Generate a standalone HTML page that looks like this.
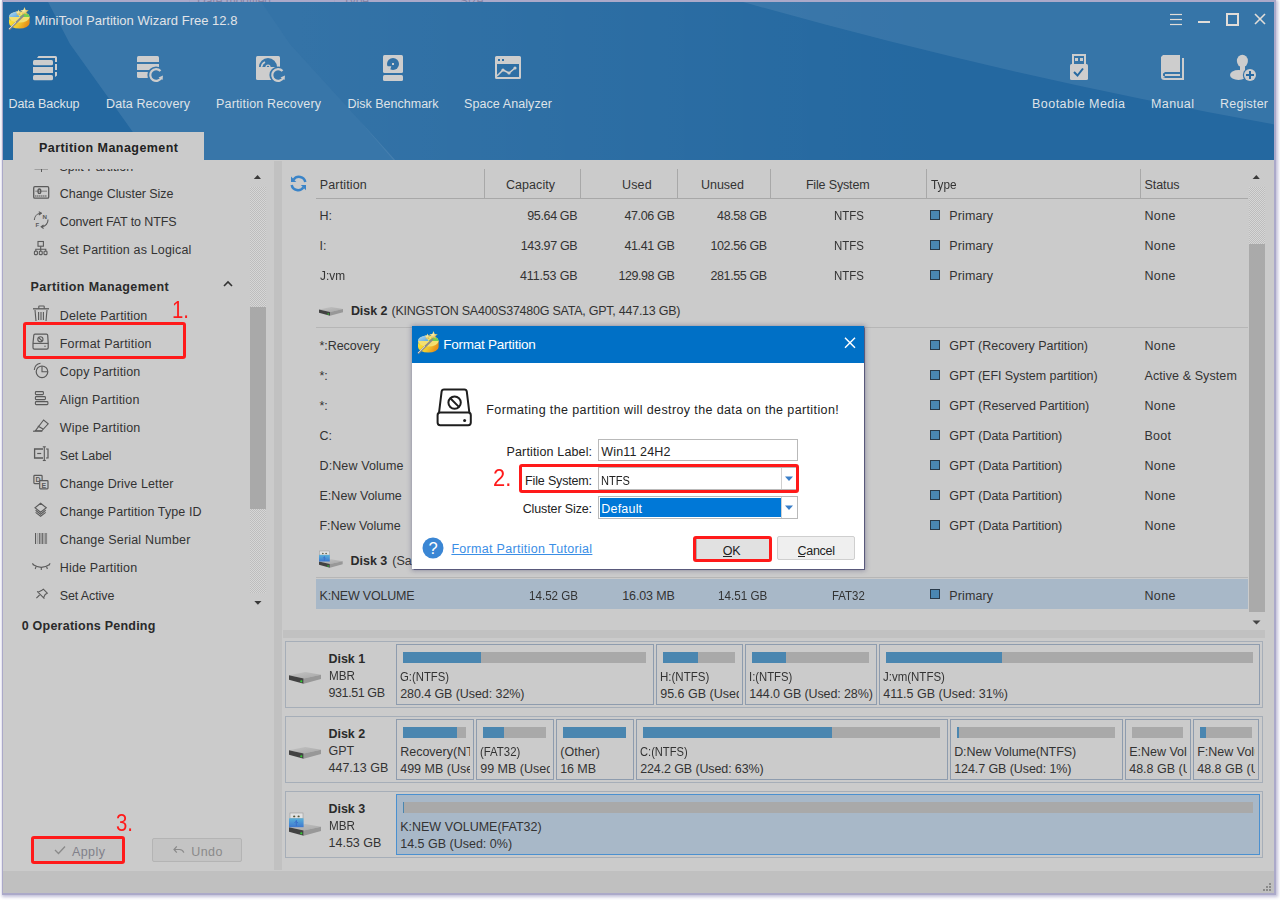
<!DOCTYPE html>
<html><head><meta charset="utf-8"><style>
html,body{margin:0;padding:0;width:1280px;height:900px;overflow:hidden;background:#fff}
.t{position:absolute;white-space:nowrap;font-family:"Liberation Sans", sans-serif;line-height:1;}
svg{overflow:visible}
</style></head><body>
<div style="position:absolute;left:0px;top:0px;width:1280px;height:900px;background:#fff"></div>
<div style="position:absolute;left:189px;top:0px;width:1px;height:3px;background:#e5e5e5"></div>
<div style="position:absolute;left:334px;top:0px;width:1px;height:3px;background:#e5e5e5"></div>
<div style="position:absolute;left:461px;top:0px;width:1px;height:3px;background:#e5e5e5"></div>
<span class="t" style="left:197px;top:-5.26px;font-size:12px;font-weight:400;color:#444;">Date modified</span>
<span class="t" style="left:343px;top:-5.26px;font-size:12px;font-weight:400;color:#444;">Type</span>
<span class="t" style="left:460px;top:-5.26px;font-size:12px;font-weight:400;color:#444;">Size</span>
<div style="position:absolute;left:2px;top:0px;width:1274px;height:895px;box-shadow:1px 1px 3px 1px rgba(120,115,170,0.45)"></div>
<div style="position:absolute;left:2px;top:0px;width:1274px;height:895px;background:rgba(150,148,188,0.8)"></div>
<div style="position:absolute;left:3px;top:160px;width:1271px;height:711px;background:#cbcbcb"></div>
<div style="position:absolute;left:3px;top:871px;width:1271px;height:22px;background:#c0c0c0"></div>
<div style="position:absolute;left:3px;top:169px;width:240px;height:20px;overflow:hidden">
<div style="position:absolute;left:-3px;top:-169px;width:1280px;height:900px">
<svg style="position:absolute;left:33px;top:155px;" width="17" height="17" viewBox="0 0 17 17"><line x1="1.5" y1="14.5" x2="15" y2="14.5" stroke="#a0a0a0"/><line x1="8.5" y1="11" x2="8.5" y2="17" stroke="#5a5a5a"/></svg>
<span class="t" style="left:59.5px;top:160.82px;font-size:12.5px;font-weight:400;color:#333;">Split Partition</span>
</div></div>
<div style="position:absolute;left:3px;top:2px;width:1271px;height:158px;overflow:hidden;background:#2468a0">
<svg style="position:absolute;left:-3px;top:-2px;" width="1280" height="162" viewBox="0 0 1280 162"><defs><linearGradient id="gB" gradientUnits="userSpaceOnUse" x1="280" y1="0" x2="950" y2="0"><stop offset="0" stop-color="#fff" stop-opacity="0.075"/><stop offset="1" stop-color="#fff" stop-opacity="0"/></linearGradient></defs><polygon points="260,0 1000,0 1000,162 395,162 360,121 290,44" fill="url(#gB)"/><polygon points="47,0 260,0 290,44 360,121 397,162 154,162 125,121 70,44" fill="#fff" fill-opacity="0.095"/><path d="M743,2 Q1000,75 1280,125.5 L1280,0 L743,0 Z" fill="#fff" fill-opacity="0.085"/></svg>
</div>
<span class="t" style="left:34.5px;top:13.90px;font-size:13px;font-weight:400;color:#e2e4e8;letter-spacing:0.020px;">MiniTool Partition Wizard Free 12.8</span>
<svg style="position:absolute;left:3px;top:4px;" width="30" height="30" viewBox="0 0 30 30">
<defs>
<linearGradient id="lya" x1="0" y1="0" x2="1" y2="0.3"><stop offset="0" stop-color="#ffe830"/><stop offset="0.6" stop-color="#f0c830"/><stop offset="1" stop-color="#e89018"/></linearGradient>
<linearGradient id="lba" x1="0" y1="0" x2="1" y2="1"><stop offset="0" stop-color="#b8dcf4"/><stop offset="1" stop-color="#5aa8e0"/></linearGradient>
<radialGradient id="lsa" cx="0.4" cy="0.4" r="0.7"><stop offset="0" stop-color="#fff4b0"/><stop offset="1" stop-color="#c8a030"/></radialGradient>
</defs>
<path d="M6,13 L6,19 A10.3,5.5 0 0 0 26.6,19 L26.6,13 Z" fill="url(#lya)"/>
<ellipse cx="16.3" cy="13" rx="10.3" ry="5.5" fill="#f4e070"/>
<path d="M16.3,13 L6,13 A10.3,5.5 0 0 1 14,7.6 Z" fill="url(#lba)"/>
<path d="M6,13 L6,15 A10.3,5 0 0 0 8,17" fill="#4a98d8" opacity="0.6"/>
<path d="M16.3,13 L22,8.5 A10.3,5.5 0 0 1 26.6,13 Z" fill="#70d050"/>
<polygon points="21.5,3 22.7,6 25.8,6.2 23.4,8.2 24.2,11.2 21.5,9.5 18.8,11.2 19.6,8.2 17.2,6.2 20.3,6" fill="url(#lsa)"/>
<polygon points="15.5,5.5 16.4,7.6 18.6,7.8 16.9,9.2 17.5,11.4 15.5,10.2 13.5,11.4 14.1,9.2 12.4,7.8 14.6,7.6" fill="url(#lsa)"/>
<polygon points="19,13 19.8,14.8 21.8,15 20.3,16.2 20.8,18.2 19,17.1 17.2,18.2 17.7,16.2 16.2,15 18.2,14.8" fill="#f0d870" opacity="0.8"/>
<line x1="6" y1="25.5" x2="21" y2="11" stroke="#8a8a8a" stroke-width="1.8"/>
<line x1="6" y1="25" x2="13" y2="18.2" stroke="#e8e8e8" stroke-width="0.8"/>
</svg>
<svg style="position:absolute;left:1168px;top:10px;" width="100" height="20" viewBox="0 0 100 20">
<g stroke="#e2ddd8" fill="none">
<line x1="2" y1="4.5" x2="14" y2="4.5" stroke-width="1.2"/>
<line x1="2" y1="9.5" x2="14" y2="9.5" stroke-width="1.2"/>
<line x1="2" y1="14.5" x2="14" y2="14.5" stroke-width="1.2"/>
<line x1="30" y1="12" x2="42" y2="12" stroke-width="2"/>
<rect x="59" y="4" width="11" height="11" stroke-width="2"/>
<line x1="87" y1="4" x2="97" y2="14" stroke-width="1.6"/>
<line x1="97" y1="4" x2="87" y2="14" stroke-width="1.6"/>
</g></svg>
<span class="t" style="left:8.5px;top:98.32px;font-size:12.5px;font-weight:400;color:#dfe3e8;letter-spacing:-0.058px;">Data Backup</span>
<span class="t" style="left:106px;top:98.32px;font-size:12.5px;font-weight:400;color:#dfe3e8;letter-spacing:0.109px;">Data Recovery</span>
<span class="t" style="left:216px;top:98.32px;font-size:12.5px;font-weight:400;color:#dfe3e8;letter-spacing:0.169px;">Partition Recovery</span>
<span class="t" style="left:347.5px;top:98.32px;font-size:12.5px;font-weight:400;color:#dfe3e8;">Disk Benchmark</span>
<span class="t" style="left:464px;top:98.32px;font-size:12.5px;font-weight:400;color:#dfe3e8;letter-spacing:0.088px;">Space Analyzer</span>
<span class="t" style="left:1032px;top:98.32px;font-size:12.5px;font-weight:400;color:#dfe3e8;letter-spacing:0.471px;">Bootable Media</span>
<span class="t" style="left:1151px;top:98.32px;font-size:12.5px;font-weight:400;color:#dfe3e8;letter-spacing:0.400px;">Manual</span>
<span class="t" style="left:1220px;top:98.32px;font-size:12.5px;font-weight:400;color:#dfe3e8;letter-spacing:0.208px;">Register</span>
<svg style="position:absolute;left:0px;top:0px;" width="1280" height="100" viewBox="0 0 1280 100">
<defs>
<mask id="mDR"><rect x="0" y="0" width="1280" height="100" fill="#fff"/><circle cx="156" cy="75" r="8.6" fill="#000"/></mask>
<mask id="mPR"><rect x="0" y="0" width="1280" height="100" fill="#fff"/><circle cx="278" cy="75" r="8.6" fill="#000"/>
  <path d="M259,67 A9,9 0 0 1 277,67 Z" fill="#000"/></mask>
<mask id="mDB"><rect x="0" y="0" width="1280" height="100" fill="#fff"/><circle cx="393" cy="64" r="6" fill="#000"/></mask>
<mask id="mRG"><rect x="0" y="0" width="1280" height="100" fill="#fff"/><circle cx="1250" cy="75" r="7.2" fill="#000"/></mask>
</defs>
<g fill="#cdcdcd">
<!-- data backup -->
<rect x="33" y="60" width="20" height="5.2" rx="1.5"/>
<rect x="33" y="67" width="20" height="6"/>
<rect x="33" y="75" width="20" height="5.2" rx="1.5"/>
<path d="M37,58 L38.5,56 L55.5,56 Q57,56 57,57.5 L57,62 L55,62 L55,58 Z"/>
<rect x="55" y="64" width="2" height="6"/>
<path d="M55,72 L57,72 L57,75.5 L55,77 Z"/>
<!-- data recovery -->
<g mask="url(#mDR)">
<path d="M137,62 L137,57.5 Q137,56 138.5,56 L157.5,56 Q159,56 159,57.5 L159,62 Z"/>
<rect x="137" y="64" width="22" height="6"/>
<path d="M137,72 L159,72 L159,78 L138.5,78 Q137,78 137,76.5 Z"/>
</g>
<path d="M160.5,71 A5.9,5.9 0 1 0 161.5,77.5" fill="none" stroke="#cdcdcd" stroke-width="2.2"/>
<polygon points="158.5,77.5 163,75.5 162.5,80"/>
<!-- partition recovery -->
<g mask="url(#mPR)"><rect x="256" y="56" width="24" height="24" rx="1.5"/></g>
<path d="M261.5,67 A6.5,6.5 0 0 1 265,62" fill="none" stroke="#cdcdcd" stroke-width="1.6"/>
<circle cx="268" cy="67" r="1.9" fill="none" stroke="#cdcdcd" stroke-width="1.4"/>
<path d="M282.5,71 A5.9,5.9 0 1 0 283.5,77.5" fill="none" stroke="#cdcdcd" stroke-width="2.2"/>
<polygon points="280.5,77.5 285,75.5 284.5,80"/>
<!-- disk benchmark -->
<g mask="url(#mDB)"><rect x="383" y="55" width="20" height="18" rx="1.5"/></g>
<polygon points="386.5,66.2 391.3,66.2 390,70.5"/>
<rect x="392" y="63" width="2" height="2"/>
<rect x="383" y="75" width="20" height="6" rx="1.5"/>
<!-- space analyzer -->
<path fill-rule="evenodd" d="M496.5,56 L519.5,56 Q521,56 521,57.5 L521,77.5 Q521,79 519.5,79 L496.5,79 Q495,79 495,77.5 L495,57.5 Q495,56 496.5,56 Z M497,64 L497,77 L519,77 L519,64 Z M498,59 L498,61 L500,61 L500,59 Z M502,59 L502,61 L504,61 L504,59 Z"/>
<polyline points="497,76 503,70 509,73 515,68" fill="none" stroke="#cdcdcd" stroke-width="1.5"/>
<circle cx="503" cy="70" r="1.6"/><circle cx="509" cy="73" r="1.6"/><circle cx="515" cy="68" r="1.6"/>
<!-- bootable media -->
<path fill-rule="evenodd" d="M1072,54 L1086,54 L1086,64 L1072,64 Z M1074,56 L1074,64 L1084,64 L1084,56 Z"/>
<rect x="1075" y="58" width="3" height="3"/><rect x="1080" y="58" width="3" height="3"/>
<rect x="1070" y="64" width="18" height="16" rx="1.5"/>
<!-- manual -->
<path d="M1163,55 L1180,55 L1180,72 L1163,72 Q1161,72 1161,74 L1161,57 Z"/>
<path d="M1162,58 L1162,77 Q1162,79 1164.5,79 L1183,79 L1183,58" fill="none" stroke="#cdcdcd" stroke-width="2"/>
<path d="M1164.5,72 Q1162,72 1162,75 Q1162,77 1164.5,77" fill="none" stroke="#cdcdcd" stroke-width="1.6"/>
<rect x="1165" y="74" width="15" height="2"/>
<!-- register -->
<g mask="url(#mRG)">
<ellipse cx="1242.4" cy="61" rx="5.5" ry="6.2"/>
<rect x="1240" y="65" width="5" height="6"/>
<ellipse cx="1238.5" cy="75" rx="8.5" ry="5"/>
</g>
<circle cx="1250" cy="75" r="6"/>
</g>
<polyline points="1074,72 1077.5,75.5 1083,68.5" fill="none" stroke="#2569a1" stroke-width="2"/>
<line x1="1246" y1="75" x2="1254" y2="75" stroke="#2569a1" stroke-width="2"/>
<line x1="1250" y1="71" x2="1250" y2="79" stroke="#2569a1" stroke-width="2"/>
</svg>
<div style="position:absolute;left:13px;top:132px;width:191px;height:28px;background:#cbcbcb"></div>
<span class="t" style="left:39px;top:141.82px;font-size:12.5px;font-weight:700;color:#222;letter-spacing:0.443px;">Partition Management</span>
<span class="t" style="left:59.75px;top:187.82px;font-size:12.5px;font-weight:400;color:#333;letter-spacing:-0.050px;">Change Cluster Size</span>
<span class="t" style="left:59.75px;top:215.82px;font-size:12.5px;font-weight:400;color:#333;letter-spacing:-0.126px;">Convert FAT to NTFS</span>
<span class="t" style="left:59.75px;top:243.82px;font-size:12.5px;font-weight:400;color:#333;letter-spacing:0.163px;">Set Partition as Logical</span>
<span class="t" style="left:59.75px;top:309.82px;font-size:12.5px;font-weight:400;color:#333;letter-spacing:0.135px;">Delete Partition</span>
<span class="t" style="left:59.75px;top:337.82px;font-size:12.5px;font-weight:400;color:#333;letter-spacing:0.189px;">Format Partition</span>
<span class="t" style="left:59.75px;top:365.82px;font-size:12.5px;font-weight:400;color:#333;letter-spacing:0.153px;">Copy Partition</span>
<span class="t" style="left:59.75px;top:393.82px;font-size:12.5px;font-weight:400;color:#333;letter-spacing:0.177px;">Align Partition</span>
<span class="t" style="left:59.75px;top:421.82px;font-size:12.5px;font-weight:400;color:#333;letter-spacing:0.207px;">Wipe Partition</span>
<span class="t" style="left:59.75px;top:449.82px;font-size:12.5px;font-weight:400;color:#333;letter-spacing:-0.116px;">Set Label</span>
<span class="t" style="left:59.75px;top:477.82px;font-size:12.5px;font-weight:400;color:#333;letter-spacing:0.101px;">Change Drive Letter</span>
<span class="t" style="left:59.75px;top:505.82px;font-size:12.5px;font-weight:400;color:#333;letter-spacing:0.103px;">Change Partition Type ID</span>
<span class="t" style="left:59.75px;top:533.82px;font-size:12.5px;font-weight:400;color:#333;letter-spacing:0.181px;">Change Serial Number</span>
<span class="t" style="left:59.75px;top:561.82px;font-size:12.5px;font-weight:400;color:#333;letter-spacing:0.181px;">Hide Partition</span>
<span class="t" style="left:59.75px;top:589.82px;font-size:12.5px;font-weight:400;color:#333;letter-spacing:-0.110px;">Set Active</span>
<svg style="position:absolute;left:0px;top:0px;" width="300" height="620" viewBox="0 0 300 620"><g fill="none" stroke="#5a5a5a" stroke-width="1.1">
<!-- cluster -->
<rect x="33.7" y="186.7" width="15" height="11.5" rx="1.2" stroke-width="1.3"/>
<line x1="35.3" y1="191.2" x2="47" y2="191.2" stroke="#888" stroke-width="1.2"/>
<ellipse cx="39.4" cy="191.2" rx="1.4" ry="2.2" stroke-width="1.3"/>
<line x1="35.3" y1="196" x2="47" y2="196" stroke-dasharray="1.1,0.9" stroke-width="1.3"/>
<!-- convert -->
<path d="M34.3,220 A7,7 0 0 1 40.5,213.3"/>
<polyline points="38.8,211.6 41,213.3 38.8,215" />
<path d="M48,219.5 A7,7 0 0 1 42,226.8"/>
<polyline points="43.6,225 41.2,226.8 43.6,228.5"/>
<!-- logical -->
<rect x="38" y="241.5" width="5.4" height="4.7"/>
<line x1="40.7" y1="246.2" x2="40.7" y2="251"/>
<polyline points="35.8,251 35.8,249.3 45.8,249.3 45.8,251"/>
<rect x="34.4" y="251.3" width="3" height="3.3" rx="0.6"/>
<rect x="39.3" y="251.3" width="2.9" height="3.3" rx="0.6"/>
<rect x="44" y="251.3" width="3" height="3.3" rx="0.6"/>
<!-- delete -->
<line x1="33" y1="308.8" x2="49" y2="308.8" stroke-width="1.3"/>
<path d="M38.8,308.5 L38.8,306.6 Q38.8,306 39.4,306 L43.6,306 Q44.2,306 44.2,306.6 L44.2,308.5"/>
<polyline points="35,310 36,321"/><polyline points="47,310 46,321"/>
<line x1="38.6" y1="312" x2="38.6" y2="320"/><line x1="41" y1="312" x2="41" y2="320"/><line x1="43.4" y1="312" x2="43.4" y2="320"/>
<!-- format -->
<path d="M35,334.2 L46.5,334.2 Q47.6,334.2 47.7,335.3 L48.2,343.3 L48.2,347.8 Q48.2,349.2 46.8,349.2 L34.4,349.2 Q33,349.2 33,347.8 L33,343.3 L33.8,335.3 Q33.9,334.2 35,334.2 Z" stroke-width="1.2"/>
<line x1="33" y1="343.4" x2="48.2" y2="343.4"/>
<circle cx="40.4" cy="339.3" r="2.6"/>
<line x1="38.6" y1="337.5" x2="42.2" y2="341.1"/>
<!-- copy -->
<circle cx="42" cy="371.8" r="5.8" stroke-width="1.2"/>
<path d="M34.3,370 A7.5,7.5 0 0 1 40.5,363.3" stroke-width="1.1"/>
<polyline points="42,366 42,371.8 47.8,371.8"/>
<!-- align -->
<rect x="35.4" y="391.6" width="8" height="3" rx="0.8"/>
<rect x="35.4" y="396.6" width="10" height="3" rx="0.8"/>
<rect x="35.4" y="401.6" width="12.5" height="3" rx="0.8"/>
<!-- wipe -->
<polygon points="35.3,430.8 43.6,420 48.2,423.9 41.8,430.8"/>
<line x1="33" y1="431.2" x2="42.3" y2="431.2"/>
<line x1="37.8" y1="426" x2="43" y2="429"/>
<!-- set label -->
<path d="M43,449 L34.6,449 L34.6,458 L43,458" stroke-width="1.3"/>
<path d="M46,449 L48,449 L48,458 L46,458" stroke-width="1.2"/>
<line x1="37.2" y1="453.5" x2="41.2" y2="453.5" stroke-width="1.2"/>
<line x1="44.3" y1="447" x2="44.3" y2="460.3"/>
<line x1="42.8" y1="446.8" x2="45.8" y2="446.8"/><line x1="42.8" y1="460.5" x2="45.8" y2="460.5"/>
<!-- drive letter -->
<rect x="33.9" y="475.4" width="8.2" height="8.2" rx="0.8" stroke-width="1.2"/>
<rect x="39.7" y="480.6" width="8.3" height="8.3" rx="0.8" fill="#cbcbcb" stroke-width="1.2"/>
<!-- type id -->
<polygon points="40.6,503.2 46.3,507.8 40.6,512.2 35,507.8"/>
<polyline points="35.6,510.2 40.6,514.2 45.7,510.2"/>
<polyline points="35.6,512.4 40.6,516.3 45.7,512.4"/>
<!-- hide -->
<path d="M32.8,564.6 Q41.3,570 49.8,564.6" stroke-width="1.2"/>
<line x1="36" y1="566.8" x2="35.2" y2="569"/><line x1="41.3" y1="567.6" x2="41.3" y2="570"/><line x1="46.6" y1="566.8" x2="47.4" y2="569"/>
<line x1="33.5" y1="565" x2="32.5" y2="563.2"/><line x1="49.1" y1="565" x2="50.1" y2="563.2"/>
<!-- set active -->
<line x1="36.4" y1="598.2" x2="39.6" y2="595"/>
<polygon points="43.3,589.2 47.3,593.2 45.2,594.4 43.6,597.6 44.4,598.6 37.2,591.4 38.2,592.2 41.4,590.6"/>
</g>
<g fill="#5a5a5a" stroke="none" font-family="Liberation Sans" font-weight="700">
<text x="42.6" y="219" font-size="6.2">N</text>
<text x="35.4" y="226.6" font-size="6">F</text>
<text x="35.6" y="482.4" font-size="7">D</text>
<text x="41.6" y="487.6" font-size="7">E</text>
<circle cx="45" cy="346.3" r="0.7"/>
<polygon points="40.5,211.8 42.2,213.3 40.3,214.6"/>
<rect x="35" y="533" width="1.1" height="11"/>
<rect x="37.3" y="533" width="0.8" height="11" fill="#999"/>
<rect x="38.9" y="533" width="0.9" height="11"/>
<rect x="40.5" y="533" width="1" height="11" fill="#777"/>
<rect x="42.2" y="533" width="1.1" height="11"/>
<rect x="44.5" y="533" width="2.6" height="11" fill="#888"/>
</g></svg>
<span class="t" style="left:30.6px;top:280.82px;font-size:12.5px;font-weight:700;color:#2a2a2a;letter-spacing:0.401px;">Partition Management</span>
<svg style="position:absolute;left:222px;top:280px;" width="12" height="8" viewBox="0 0 12 8"><polyline points="2,6 6,2 10,6" stroke="#333" stroke-width="1.6" fill="none"/></svg>
<span class="t" style="left:21.7px;top:620.12px;font-size:12.5px;font-weight:700;color:#2a2a2a;letter-spacing:0.237px;">0 Operations Pending</span>
<svg style="position:absolute;left:250px;top:171px;" width="16" height="10" viewBox="0 0 16 10"><polygon points="3.8,7.9 7.6,4 11,7.9" fill="#3a3a3a"/></svg>
<div style="position:absolute;left:250px;top:187px;width:16px;height:406px;background:repeating-conic-gradient(#bdbdbd 0 25%, #d6d6d6 0 50%) 0 0/2px 2px"></div>
<div style="position:absolute;left:250px;top:307px;width:16px;height:202px;background:#a9a9a9"></div>
<svg style="position:absolute;left:250px;top:598px;" width="16" height="10" viewBox="0 0 16 10"><polygon points="4.3,3 11.5,3 7.9,6.8" fill="#3a3a3a"/></svg>
<div style="position:absolute;left:274px;top:161px;width:8px;height:709px;background:#c1c1c1"></div>
<div style="position:absolute;left:23px;top:321.5px;width:162.5px;height:37px;border:3px solid #ff1a1a;border-radius:3px;box-sizing:border-box"></div>
<span class="t" style="left:171.5px;transform:scaleX(0.8669);transform-origin:0 0;top:298.91px;font-size:23.5px;font-weight:400;color:#ff1a1a;">1.</span>
<div style="position:absolute;left:33px;top:838px;width:90px;height:24px;background:#c4c4c4;border:1px solid #b4b4b4;box-sizing:border-box"></div>
<svg style="position:absolute;left:54px;top:845px;" width="12" height="10" viewBox="0 0 12 10"><polyline points="1,5 4.5,8.5 11,1.5" stroke="#8a8a8a" stroke-width="1.3" fill="none"/></svg>
<span class="t" style="left:71.9px;top:846.22px;font-size:12.5px;font-weight:400;color:#80808a;letter-spacing:0.430px;">Apply</span>
<div style="position:absolute;left:31px;top:836px;width:93.5px;height:28px;border:3px solid #ff1a1a;border-radius:3px;box-sizing:border-box"></div>
<span class="t" style="left:116px;transform:scaleX(0.8860);transform-origin:0 0;top:812.33px;font-size:23px;font-weight:400;color:#ff1a1a;">3.</span>
<div style="position:absolute;left:152px;top:838px;width:90px;height:24px;background:#c4c4c4;border:1px solid #b4b4b4;box-sizing:border-box;border-radius:2px"></div>
<svg style="position:absolute;left:0px;top:0px;" width="250" height="870" viewBox="0 0 250 870"><g fill="none" stroke="#8a8a8a" stroke-width="1.2"><polyline points="176.8,846.3 174,849.5 176.8,852.6"/><path d="M174.2,849.5 L179.5,849.5 Q182.8,849.5 183.8,852.6"/></g></svg>
<span class="t" style="left:191.2px;top:845.82px;font-size:12.5px;font-weight:400;color:#8a8a8a;letter-spacing:0.436px;">Undo</span>
<svg style="position:absolute;left:0px;top:0px;" width="320" height="200" viewBox="0 0 320 200"><g fill="#3a84c8"><path d="M305.3,182 A6.5,6.5 0 0 0 293.6,179.6" fill="none" stroke="#3a84c8" stroke-width="2.5"/><polygon points="291,176.6 291,182.1 296.3,182.1"/><path d="M291.7,185 A6.5,6.5 0 0 0 303.4,187.4" fill="none" stroke="#3a84c8" stroke-width="2.5"/><polygon points="306,184.9 306,190.2 300.8,184.9"/></g></svg>
<span class="t" style="left:319.8px;top:179.32px;font-size:12.5px;font-weight:400;color:#333;letter-spacing:0.143px;">Partition</span>
<span class="t" style="left:506px;top:179.32px;font-size:12.5px;font-weight:400;color:#333;letter-spacing:0.051px;">Capacity</span>
<span class="t" style="left:622px;top:179.32px;font-size:12.5px;font-weight:400;color:#333;letter-spacing:0.171px;">Used</span>
<span class="t" style="left:701px;top:179.32px;font-size:12.5px;font-weight:400;color:#333;letter-spacing:-0.019px;">Unused</span>
<span class="t" style="left:805.9px;top:179.32px;font-size:12.5px;font-weight:400;color:#333;letter-spacing:-0.160px;">File System</span>
<span class="t" style="left:931.4px;transform:scaleX(0.9443);transform-origin:0 0;top:179.32px;font-size:12.5px;font-weight:400;color:#333;">Type</span>
<span class="t" style="left:1144.5px;top:179.32px;font-size:12.5px;font-weight:400;color:#333;letter-spacing:-0.087px;">Status</span>
<div style="position:absolute;left:484px;top:169px;width:1px;height:30px;background:#a8a8a8"></div>
<div style="position:absolute;left:580px;top:169px;width:1px;height:30px;background:#a8a8a8"></div>
<div style="position:absolute;left:677px;top:169px;width:1px;height:30px;background:#a8a8a8"></div>
<div style="position:absolute;left:770px;top:169px;width:1px;height:30px;background:#a8a8a8"></div>
<div style="position:absolute;left:926px;top:169px;width:1px;height:30px;background:#a8a8a8"></div>
<div style="position:absolute;left:1140px;top:169px;width:1px;height:30px;background:#a8a8a8"></div>
<div style="position:absolute;left:316px;top:198px;width:932px;height:1px;background:#a8a8a8"></div>
<svg style="position:absolute;left:1248px;top:171px;" width="17" height="10" viewBox="0 0 17 10"><polygon points="4.6,7.9 8.4,4 11.8,7.9" fill="#3a3a3a"/></svg>
<div style="position:absolute;left:1249px;top:187px;width:16px;height:57px;background:repeating-conic-gradient(#bdbdbd 0 25%, #d6d6d6 0 50%) 0 0/2px 2px"></div>
<div style="position:absolute;left:1249px;top:244px;width:16px;height:368px;background:#aaaaaa"></div>
<svg style="position:absolute;left:1248px;top:618px;" width="17" height="10" viewBox="0 0 17 10"><polygon points="4.5,2.5 12.5,2.5 8.5,6.5" fill="#444"/></svg>
<span class="t" style="left:319.5px;top:210.32px;font-size:12.5px;font-weight:400;color:#333;">H:</span>
<span class="t" style="left:527.20px;top:210.32px;font-size:12.5px;font-weight:400;color:#333;letter-spacing:-0.347px;">95.64 GB</span>
<span class="t" style="left:624.40px;top:210.32px;font-size:12.5px;font-weight:400;color:#333;letter-spacing:-0.347px;">47.06 GB</span>
<span class="t" style="left:717.10px;top:210.32px;font-size:12.5px;font-weight:400;color:#333;letter-spacing:-0.390px;">48.58 GB</span>
<span class="t" style="left:833.65px;transform:scaleX(0.9160);transform-origin:0 0;top:210.32px;font-size:12.5px;font-weight:400;color:#333;">NTFS</span>
<div style="position:absolute;left:929.5px;top:209.5px;width:10px;height:10px;background:#4a86b2;border:1px solid #2a3a4a;box-sizing:border-box"></div>
<span class="t" style="left:949.3px;top:210.32px;font-size:12.5px;font-weight:400;color:#333;letter-spacing:0.123px;">Primary</span>
<span class="t" style="left:1144.5px;top:210.32px;font-size:12.5px;font-weight:400;color:#333;letter-spacing:0.336px;">None</span>
<span class="t" style="left:319.5px;top:240.32px;font-size:12.5px;font-weight:400;color:#333;">I:</span>
<span class="t" style="left:520.70px;top:240.32px;font-size:12.5px;font-weight:400;color:#333;letter-spacing:-0.358px;">143.97 GB</span>
<span class="t" style="left:624.40px;top:240.32px;font-size:12.5px;font-weight:400;color:#333;letter-spacing:-0.347px;">41.41 GB</span>
<span class="t" style="left:710.40px;top:240.32px;font-size:12.5px;font-weight:400;color:#333;letter-spacing:-0.371px;">102.56 GB</span>
<span class="t" style="left:833.65px;transform:scaleX(0.9160);transform-origin:0 0;top:240.32px;font-size:12.5px;font-weight:400;color:#333;">NTFS</span>
<div style="position:absolute;left:929.5px;top:239.5px;width:10px;height:10px;background:#4a86b2;border:1px solid #2a3a4a;box-sizing:border-box"></div>
<span class="t" style="left:949.3px;top:240.32px;font-size:12.5px;font-weight:400;color:#333;letter-spacing:0.123px;">Primary</span>
<span class="t" style="left:1144.5px;top:240.32px;font-size:12.5px;font-weight:400;color:#333;letter-spacing:0.336px;">None</span>
<span class="t" style="left:319.5px;transform:scaleX(0.9473);transform-origin:0 0;top:270.32px;font-size:12.5px;font-weight:400;color:#333;">J:vm</span>
<span class="t" style="left:520.00px;top:270.32px;font-size:12.5px;font-weight:400;color:#333;letter-spacing:-0.155px;">411.53 GB</span>
<span class="t" style="left:618.50px;top:270.32px;font-size:12.5px;font-weight:400;color:#333;letter-spacing:-0.433px;">129.98 GB</span>
<span class="t" style="left:710.40px;top:270.32px;font-size:12.5px;font-weight:400;color:#333;letter-spacing:-0.371px;">281.55 GB</span>
<span class="t" style="left:833.65px;transform:scaleX(0.9160);transform-origin:0 0;top:270.32px;font-size:12.5px;font-weight:400;color:#333;">NTFS</span>
<div style="position:absolute;left:929.5px;top:269.5px;width:10px;height:10px;background:#4a86b2;border:1px solid #2a3a4a;box-sizing:border-box"></div>
<span class="t" style="left:949.3px;top:270.32px;font-size:12.5px;font-weight:400;color:#333;letter-spacing:0.123px;">Primary</span>
<span class="t" style="left:1144.5px;top:270.32px;font-size:12.5px;font-weight:400;color:#333;letter-spacing:0.336px;">None</span>
<svg style="position:absolute;left:319px;top:307.1px;" width="24.0" height="9.0" viewBox="0 0 24.0 9.0"><g transform="scale(0.75)"><defs><linearGradient id="dtop" x1="0" y1="0" x2="1" y2="1"><stop offset="0" stop-color="#c2c2c2"/><stop offset="1" stop-color="#a8a8a8"/></linearGradient><linearGradient id="ublue" x1="0" y1="0" x2="0" y2="1"><stop offset="0" stop-color="#5ab0d8"/><stop offset="1" stop-color="#3d78d0"/></linearGradient></defs><polygon points="0,3.2 16.3,0 32,2.7 14.7,6.5" fill="url(#dtop)"/><polygon points="0,3.2 14.7,6.5 14.7,11.7 0,7.7" fill="#424242"/><polygon points="14.7,6.5 32,2.7 32,7 14.7,11.7" fill="#989898"/><circle cx="12.3" cy="9.3" r="1.1" fill="#3c3"/></g></svg>
<span class="t" style="left:350.9px;top:305.32px;font-size:12.5px;font-weight:700;color:#2a2a2a;letter-spacing:-0.049px;">Disk 2</span>
<span class="t" style="left:391.5px;top:305.32px;font-size:12.5px;font-weight:400;color:#333;letter-spacing:-0.243px;">(KINGSTON SA400S37480G SATA, GPT, 447.13 GB)</span>
<div style="position:absolute;left:316px;top:327px;width:932px;height:1px;background:#b6b6b6"></div>
<span class="t" style="left:319.5px;top:340.32px;font-size:12.5px;font-weight:400;color:#333;letter-spacing:-0.060px;">*:Recovery</span>
<div style="position:absolute;left:929.5px;top:339.5px;width:10px;height:10px;background:#4a86b2;border:1px solid #2a3a4a;box-sizing:border-box"></div>
<span class="t" style="left:949.3px;top:340.32px;font-size:12.5px;font-weight:400;color:#333;letter-spacing:-0.031px;">GPT (Recovery Partition)</span>
<span class="t" style="left:1144.5px;top:340.32px;font-size:12.5px;font-weight:400;color:#333;letter-spacing:0.336px;">None</span>
<span class="t" style="left:319.5px;top:370.32px;font-size:12.5px;font-weight:400;color:#333;">*:</span>
<div style="position:absolute;left:929.5px;top:369.5px;width:10px;height:10px;background:#4a86b2;border:1px solid #2a3a4a;box-sizing:border-box"></div>
<span class="t" style="left:949.3px;top:370.32px;font-size:12.5px;font-weight:400;color:#333;letter-spacing:-0.060px;">GPT (EFI System partition)</span>
<span class="t" style="left:1144.5px;top:370.32px;font-size:12.5px;font-weight:400;color:#333;letter-spacing:0.093px;">Active &amp; System</span>
<span class="t" style="left:319.5px;top:400.32px;font-size:12.5px;font-weight:400;color:#333;">*:</span>
<div style="position:absolute;left:929.5px;top:399.5px;width:10px;height:10px;background:#4a86b2;border:1px solid #2a3a4a;box-sizing:border-box"></div>
<span class="t" style="left:949.3px;top:400.32px;font-size:12.5px;font-weight:400;color:#333;letter-spacing:-0.005px;">GPT (Reserved Partition)</span>
<span class="t" style="left:1144.5px;top:400.32px;font-size:12.5px;font-weight:400;color:#333;letter-spacing:0.336px;">None</span>
<span class="t" style="left:319.5px;top:430.32px;font-size:12.5px;font-weight:400;color:#333;">C:</span>
<div style="position:absolute;left:929.5px;top:429.5px;width:10px;height:10px;background:#4a86b2;border:1px solid #2a3a4a;box-sizing:border-box"></div>
<span class="t" style="left:949.3px;top:430.32px;font-size:12.5px;font-weight:400;color:#333;letter-spacing:-0.001px;">GPT (Data Partition)</span>
<span class="t" style="left:1144.5px;top:430.32px;font-size:12.5px;font-weight:400;color:#333;letter-spacing:0.260px;">Boot</span>
<span class="t" style="left:319.5px;top:460.32px;font-size:12.5px;font-weight:400;color:#333;letter-spacing:0.110px;">D:New Volume</span>
<div style="position:absolute;left:929.5px;top:459.5px;width:10px;height:10px;background:#4a86b2;border:1px solid #2a3a4a;box-sizing:border-box"></div>
<span class="t" style="left:949.3px;top:460.32px;font-size:12.5px;font-weight:400;color:#333;letter-spacing:-0.001px;">GPT (Data Partition)</span>
<span class="t" style="left:1144.5px;top:460.32px;font-size:12.5px;font-weight:400;color:#333;letter-spacing:0.336px;">None</span>
<span class="t" style="left:319.5px;top:490.32px;font-size:12.5px;font-weight:400;color:#333;letter-spacing:0.029px;">E:New Volume</span>
<div style="position:absolute;left:929.5px;top:489.5px;width:10px;height:10px;background:#4a86b2;border:1px solid #2a3a4a;box-sizing:border-box"></div>
<span class="t" style="left:949.3px;top:490.32px;font-size:12.5px;font-weight:400;color:#333;letter-spacing:-0.001px;">GPT (Data Partition)</span>
<span class="t" style="left:1144.5px;top:490.32px;font-size:12.5px;font-weight:400;color:#333;letter-spacing:0.336px;">None</span>
<span class="t" style="left:319.5px;top:520.32px;font-size:12.5px;font-weight:400;color:#333;letter-spacing:-0.016px;">F:New Volume</span>
<div style="position:absolute;left:929.5px;top:519.5px;width:10px;height:10px;background:#4a86b2;border:1px solid #2a3a4a;box-sizing:border-box"></div>
<span class="t" style="left:949.3px;top:520.32px;font-size:12.5px;font-weight:400;color:#333;letter-spacing:-0.001px;">GPT (Data Partition)</span>
<span class="t" style="left:1144.5px;top:520.32px;font-size:12.5px;font-weight:400;color:#333;letter-spacing:0.336px;">None</span>
<svg style="position:absolute;left:319px;top:550.79px;" width="23.68" height="17.02" viewBox="0 0 23.68 17.02"><g transform="scale(0.74)"><defs><linearGradient id="dtop" x1="0" y1="0" x2="1" y2="1"><stop offset="0" stop-color="#c2c2c2"/><stop offset="1" stop-color="#a8a8a8"/></linearGradient><linearGradient id="ublue" x1="0" y1="0" x2="0" y2="1"><stop offset="0" stop-color="#5ab0d8"/><stop offset="1" stop-color="#3d78d0"/></linearGradient></defs><polygon points="0,14.2 16.3,11 32,13.7 14.7,17.5" fill="url(#dtop)"/><polygon points="0,14.2 14.7,17.5 14.7,22.7 0,18.7" fill="#424242"/><polygon points="14.7,17.5 32,13.7 32,18 14.7,22.7" fill="#989898"/><circle cx="12.3" cy="20.3" r="1.1" fill="#3c3"/><rect x="1" y="0" width="13" height="5.5" fill="#e2e2e2" stroke="#9a9a9a" stroke-width="0.6"/><ellipse cx="5.2" cy="3.4" rx="1.1" ry="0.9" fill="#55553a"/><ellipse cx="9.6" cy="3.4" rx="1.1" ry="0.9" fill="#55553a"/><rect x="0" y="5.3" width="14.6" height="8.9" fill="url(#ublue)"/><path d="M7.3,7 L7.3,13 M5.5,9.5 L7.3,8.5 L9,10" stroke="#3a6ac8" stroke-width="0.9" fill="none"/></g></svg>
<span class="t" style="left:350.6px;top:554.82px;font-size:12.5px;font-weight:700;color:#2a2a2a;letter-spacing:-0.049px;">Disk 3</span>
<span class="t" style="left:392.3px;top:554.82px;font-size:12.5px;font-weight:400;color:#333;">(SanDisk Cruzer Blade USB, MBR, 14.53 GB)</span>
<div style="position:absolute;left:316px;top:577px;width:932px;height:1px;background:#b6b6b6"></div>
<div style="position:absolute;left:316px;top:579px;width:932px;height:30px;background:#a8b8c8"></div>
<span class="t" style="left:319.5px;top:589.82px;font-size:12.5px;font-weight:400;color:#333;letter-spacing:-0.195px;">K:NEW VOLUME</span>
<span class="t" style="left:528.50px;transform:scaleX(0.9294);transform-origin:0 0;top:589.82px;font-size:12.5px;font-weight:400;color:#333;">14.52 GB</span>
<span class="t" style="left:622.30px;top:589.82px;font-size:12.5px;font-weight:400;color:#333;letter-spacing:-0.145px;">16.03 MB</span>
<span class="t" style="left:717.90px;transform:scaleX(0.9332);transform-origin:0 0;top:589.82px;font-size:12.5px;font-weight:400;color:#333;">14.51 GB</span>
<span class="t" style="left:832.20px;transform:scaleX(0.9135);transform-origin:0 0;top:589.82px;font-size:12.5px;font-weight:400;color:#333;">FAT32</span>
<div style="position:absolute;left:929.5px;top:589px;width:10px;height:10px;background:#4a86b2;border:1px solid #2a3a4a;box-sizing:border-box"></div>
<span class="t" style="left:949.3px;top:589.82px;font-size:12.5px;font-weight:400;color:#333;letter-spacing:0.123px;">Primary</span>
<span class="t" style="left:1144.5px;top:589.82px;font-size:12.5px;font-weight:400;color:#333;letter-spacing:0.336px;">None</span>
<div style="position:absolute;left:283px;top:630px;width:982px;height:8px;background:#c1c1c1"></div>
<div style="position:absolute;left:285px;top:641px;width:978px;height:67px;border:1px solid #a6aeb8;box-sizing:border-box"></div>
<svg style="position:absolute;left:289px;top:671.8px;" width="32.0" height="12.0" viewBox="0 0 32.0 12.0"><g transform="scale(1.0)"><defs><linearGradient id="dtop" x1="0" y1="0" x2="1" y2="1"><stop offset="0" stop-color="#c2c2c2"/><stop offset="1" stop-color="#a8a8a8"/></linearGradient><linearGradient id="ublue" x1="0" y1="0" x2="0" y2="1"><stop offset="0" stop-color="#5ab0d8"/><stop offset="1" stop-color="#3d78d0"/></linearGradient></defs><polygon points="0,3.2 16.3,0 32,2.7 14.7,6.5" fill="url(#dtop)"/><polygon points="0,3.2 14.7,6.5 14.7,11.7 0,7.7" fill="#424242"/><polygon points="14.7,6.5 32,2.7 32,7 14.7,11.7" fill="#989898"/><circle cx="12.3" cy="9.3" r="1.1" fill="#3c3"/></g></svg>
<span class="t" style="left:328.5px;top:652.82px;font-size:12.5px;font-weight:700;color:#2a2a2a;letter-spacing:-0.029px;">Disk 1</span>
<span class="t" style="left:328.5px;transform:scaleX(0.9359);transform-origin:0 0;top:670.02px;font-size:12.5px;font-weight:400;color:#333;">MBR</span>
<span class="t" style="left:328.5px;top:686.82px;font-size:12.5px;font-weight:400;color:#333;letter-spacing:-0.408px;">931.51 GB</span>
<div style="position:absolute;left:395.5px;top:644px;width:258.0px;height:61px;border:1px solid #8e9cae;box-sizing:border-box"></div>
<div style="position:absolute;left:402.7px;top:652px;width:243.6px;height:11px;background:#a9a9a9"></div>
<div style="position:absolute;left:402.7px;top:652px;width:78.0px;height:11px;background:#4a86b0"></div>
<div style="position:absolute;left:396.5px;top:667px;width:253.0px;height:36px;overflow:hidden"><div style="position:absolute;left:-396.5px;top:-667px;width:1280px;height:900px">
<span class="t" style="left:400.2px;transform:scaleX(0.9064);transform-origin:0 0;top:670.92px;font-size:12.5px;font-weight:400;color:#333;">G:(NTFS)</span>
<span class="t" style="left:400.2px;top:687.62px;font-size:12.5px;font-weight:400;color:#333;letter-spacing:-0.077px;">280.4 GB (Used: 32%)</span>
</div></div>
<div style="position:absolute;left:655.5px;top:644px;width:87.0px;height:61px;border:1px solid #8e9cae;box-sizing:border-box"></div>
<div style="position:absolute;left:662.7px;top:652px;width:72.6px;height:11px;background:#a9a9a9"></div>
<div style="position:absolute;left:662.7px;top:652px;width:35.3px;height:11px;background:#4a86b0"></div>
<div style="position:absolute;left:656.5px;top:667px;width:82.0px;height:36px;overflow:hidden"><div style="position:absolute;left:-656.5px;top:-667px;width:1280px;height:900px">
<span class="t" style="left:660.2px;transform:scaleX(0.9220);transform-origin:0 0;top:670.92px;font-size:12.5px;font-weight:400;color:#333;">H:(NTFS)</span>
<span class="t" style="left:660.2px;top:687.62px;font-size:12.5px;font-weight:400;color:#333;">95.6 GB (Used: 49%)</span>
</div></div>
<div style="position:absolute;left:744.5px;top:644px;width:132.0px;height:61px;border:1px solid #8e9cae;box-sizing:border-box"></div>
<div style="position:absolute;left:751.7px;top:652px;width:117.6px;height:11px;background:#a9a9a9"></div>
<div style="position:absolute;left:751.7px;top:652px;width:34.0px;height:11px;background:#4a86b0"></div>
<div style="position:absolute;left:745.5px;top:667px;width:127.0px;height:36px;overflow:hidden"><div style="position:absolute;left:-745.5px;top:-667px;width:1280px;height:900px">
<span class="t" style="left:749.2px;transform:scaleX(0.9036);transform-origin:0 0;top:670.92px;font-size:12.5px;font-weight:400;color:#333;">I:(NTFS)</span>
<span class="t" style="left:749.2px;top:687.62px;font-size:12.5px;font-weight:400;color:#333;letter-spacing:-0.109px;">144.0 GB (Used: 28%)</span>
</div></div>
<div style="position:absolute;left:878.5px;top:644px;width:381.5px;height:61px;border:1px solid #8e9cae;box-sizing:border-box"></div>
<div style="position:absolute;left:885.7px;top:652px;width:367.1px;height:11px;background:#a9a9a9"></div>
<div style="position:absolute;left:885.7px;top:652px;width:116.2px;height:11px;background:#4a86b0"></div>
<div style="position:absolute;left:879.5px;top:667px;width:376.5px;height:36px;overflow:hidden"><div style="position:absolute;left:-879.5px;top:-667px;width:1280px;height:900px">
<span class="t" style="left:883.2px;transform:scaleX(0.9190);transform-origin:0 0;top:670.92px;font-size:12.5px;font-weight:400;color:#333;">J:vm(NTFS)</span>
<span class="t" style="left:883.2px;top:687.62px;font-size:12.5px;font-weight:400;color:#333;">411.5 GB (Used: 31%)</span>
</div></div>
<div style="position:absolute;left:285px;top:716px;width:978px;height:67px;border:1px solid #a6aeb8;box-sizing:border-box"></div>
<svg style="position:absolute;left:289px;top:746.8px;" width="32.0" height="12.0" viewBox="0 0 32.0 12.0"><g transform="scale(1.0)"><defs><linearGradient id="dtop" x1="0" y1="0" x2="1" y2="1"><stop offset="0" stop-color="#c2c2c2"/><stop offset="1" stop-color="#a8a8a8"/></linearGradient><linearGradient id="ublue" x1="0" y1="0" x2="0" y2="1"><stop offset="0" stop-color="#5ab0d8"/><stop offset="1" stop-color="#3d78d0"/></linearGradient></defs><polygon points="0,3.2 16.3,0 32,2.7 14.7,6.5" fill="url(#dtop)"/><polygon points="0,3.2 14.7,6.5 14.7,11.7 0,7.7" fill="#424242"/><polygon points="14.7,6.5 32,2.7 32,7 14.7,11.7" fill="#989898"/><circle cx="12.3" cy="9.3" r="1.1" fill="#3c3"/></g></svg>
<span class="t" style="left:328.5px;top:727.82px;font-size:12.5px;font-weight:700;color:#2a2a2a;letter-spacing:-0.029px;">Disk 2</span>
<span class="t" style="left:328.5px;top:745.02px;font-size:12.5px;font-weight:400;color:#333;">GPT</span>
<span class="t" style="left:328.5px;top:761.82px;font-size:12.5px;font-weight:400;color:#333;">447.13 GB</span>
<div style="position:absolute;left:395.5px;top:719px;width:78.0px;height:61px;border:1px solid #8e9cae;box-sizing:border-box"></div>
<div style="position:absolute;left:402.7px;top:727px;width:63.6px;height:11px;background:#a9a9a9"></div>
<div style="position:absolute;left:402.7px;top:727px;width:54.1px;height:11px;background:#4a86b0"></div>
<div style="position:absolute;left:396.5px;top:742px;width:73.0px;height:36px;overflow:hidden"><div style="position:absolute;left:-396.5px;top:-742px;width:1280px;height:900px">
<span class="t" style="left:400.2px;top:745.92px;font-size:12.5px;font-weight:400;color:#333;">Recovery(NTFS)</span>
<span class="t" style="left:400.2px;top:762.62px;font-size:12.5px;font-weight:400;color:#333;">499 MB (Used: 86%)</span>
</div></div>
<div style="position:absolute;left:475.5px;top:719px;width:78.0px;height:61px;border:1px solid #8e9cae;box-sizing:border-box"></div>
<div style="position:absolute;left:482.7px;top:727px;width:63.6px;height:11px;background:#a9a9a9"></div>
<div style="position:absolute;left:482.7px;top:727px;width:21.3px;height:11px;background:#4a86b0"></div>
<div style="position:absolute;left:476.5px;top:742px;width:73.0px;height:36px;overflow:hidden"><div style="position:absolute;left:-476.5px;top:-742px;width:1280px;height:900px">
<span class="t" style="left:480.2px;transform:scaleX(0.9111);transform-origin:0 0;top:745.92px;font-size:12.5px;font-weight:400;color:#333;">(FAT32)</span>
<span class="t" style="left:480.2px;top:762.62px;font-size:12.5px;font-weight:400;color:#333;">99 MB (Used: 34%)</span>
</div></div>
<div style="position:absolute;left:555.5px;top:719px;width:78.0px;height:61px;border:1px solid #8e9cae;box-sizing:border-box"></div>
<div style="position:absolute;left:562.7px;top:727px;width:63.6px;height:11px;background:#a9a9a9"></div>
<div style="position:absolute;left:562.7px;top:727px;width:63.6px;height:11px;background:#4a86b0"></div>
<div style="position:absolute;left:556.5px;top:742px;width:73.0px;height:36px;overflow:hidden"><div style="position:absolute;left:-556.5px;top:-742px;width:1280px;height:900px">
<span class="t" style="left:560.2px;top:745.92px;font-size:12.5px;font-weight:400;color:#333;letter-spacing:0.034px;">(Other)</span>
<span class="t" style="left:560.2px;top:762.62px;font-size:12.5px;font-weight:400;color:#333;letter-spacing:-0.085px;">16 MB</span>
</div></div>
<div style="position:absolute;left:635.5px;top:719px;width:312.0px;height:61px;border:1px solid #8e9cae;box-sizing:border-box"></div>
<div style="position:absolute;left:642.7px;top:727px;width:297.6px;height:11px;background:#a9a9a9"></div>
<div style="position:absolute;left:642.7px;top:727px;width:189.4px;height:11px;background:#4a86b0"></div>
<div style="position:absolute;left:636.5px;top:742px;width:307.0px;height:36px;overflow:hidden"><div style="position:absolute;left:-636.5px;top:-742px;width:1280px;height:900px">
<span class="t" style="left:640.2px;transform:scaleX(0.8902);transform-origin:0 0;top:745.92px;font-size:12.5px;font-weight:400;color:#333;">C:(NTFS)</span>
<span class="t" style="left:640.2px;top:762.62px;font-size:12.5px;font-weight:400;color:#333;letter-spacing:-0.119px;">224.2 GB (Used: 63%)</span>
</div></div>
<div style="position:absolute;left:949.5px;top:719px;width:173.0px;height:61px;border:1px solid #8e9cae;box-sizing:border-box"></div>
<div style="position:absolute;left:956.7px;top:727px;width:158.6px;height:11px;background:#a9a9a9"></div>
<div style="position:absolute;left:956.7px;top:727px;width:2.6px;height:11px;background:#4a86b0"></div>
<div style="position:absolute;left:950.5px;top:742px;width:168.0px;height:36px;overflow:hidden"><div style="position:absolute;left:-950.5px;top:-742px;width:1280px;height:900px">
<span class="t" style="left:954.2px;top:745.92px;font-size:12.5px;font-weight:400;color:#333;letter-spacing:-0.102px;">D:New Volume(NTFS)</span>
<span class="t" style="left:954.2px;top:762.62px;font-size:12.5px;font-weight:400;color:#333;letter-spacing:-0.084px;">124.7 GB (Used: 1%)</span>
</div></div>
<div style="position:absolute;left:1124.5px;top:719px;width:66.0px;height:61px;border:1px solid #8e9cae;box-sizing:border-box"></div>
<div style="position:absolute;left:1131.7px;top:727px;width:51.6px;height:11px;background:#a9a9a9"></div>
<div style="position:absolute;left:1125.5px;top:742px;width:61.0px;height:36px;overflow:hidden"><div style="position:absolute;left:-1125.5px;top:-742px;width:1280px;height:900px">
<span class="t" style="left:1129.2px;top:745.92px;font-size:12.5px;font-weight:400;color:#333;">E:New Volume(NTFS)</span>
<span class="t" style="left:1129.2px;top:762.62px;font-size:12.5px;font-weight:400;color:#333;">48.8 GB (Used: 0%)</span>
</div></div>
<div style="position:absolute;left:1192.5px;top:719px;width:66.5px;height:61px;border:1px solid #8e9cae;box-sizing:border-box"></div>
<div style="position:absolute;left:1199.7px;top:727px;width:52.1px;height:11px;background:#a9a9a9"></div>
<div style="position:absolute;left:1199.7px;top:727px;width:6.3px;height:11px;background:#4a86b0"></div>
<div style="position:absolute;left:1193.5px;top:742px;width:61.5px;height:36px;overflow:hidden"><div style="position:absolute;left:-1193.5px;top:-742px;width:1280px;height:900px">
<span class="t" style="left:1197.2px;top:745.92px;font-size:12.5px;font-weight:400;color:#333;">F:New Volume(NTFS)</span>
<span class="t" style="left:1197.2px;top:762.62px;font-size:12.5px;font-weight:400;color:#333;">48.8 GB (Used: 0%)</span>
</div></div>
<div style="position:absolute;left:285px;top:791px;width:978px;height:67px;border:1px solid #a6aeb8;box-sizing:border-box"></div>
<svg style="position:absolute;left:289px;top:813.3px;" width="32.0" height="23.0" viewBox="0 0 32.0 23.0"><g transform="scale(1.0)"><defs><linearGradient id="dtop" x1="0" y1="0" x2="1" y2="1"><stop offset="0" stop-color="#c2c2c2"/><stop offset="1" stop-color="#a8a8a8"/></linearGradient><linearGradient id="ublue" x1="0" y1="0" x2="0" y2="1"><stop offset="0" stop-color="#5ab0d8"/><stop offset="1" stop-color="#3d78d0"/></linearGradient></defs><polygon points="0,14.2 16.3,11 32,13.7 14.7,17.5" fill="url(#dtop)"/><polygon points="0,14.2 14.7,17.5 14.7,22.7 0,18.7" fill="#424242"/><polygon points="14.7,17.5 32,13.7 32,18 14.7,22.7" fill="#989898"/><circle cx="12.3" cy="20.3" r="1.1" fill="#3c3"/><rect x="1" y="0" width="13" height="5.5" fill="#e2e2e2" stroke="#9a9a9a" stroke-width="0.6"/><ellipse cx="5.2" cy="3.4" rx="1.1" ry="0.9" fill="#55553a"/><ellipse cx="9.6" cy="3.4" rx="1.1" ry="0.9" fill="#55553a"/><rect x="0" y="5.3" width="14.6" height="8.9" fill="url(#ublue)"/><path d="M7.3,7 L7.3,13 M5.5,9.5 L7.3,8.5 L9,10" stroke="#3a6ac8" stroke-width="0.9" fill="none"/></g></svg>
<span class="t" style="left:328.5px;top:802.82px;font-size:12.5px;font-weight:700;color:#2a2a2a;letter-spacing:-0.029px;">Disk 3</span>
<span class="t" style="left:328.5px;transform:scaleX(0.9359);transform-origin:0 0;top:820.02px;font-size:12.5px;font-weight:400;color:#333;">MBR</span>
<span class="t" style="left:328.5px;top:836.82px;font-size:12.5px;font-weight:400;color:#333;">14.53 GB</span>
<div style="position:absolute;left:395.5px;top:794px;width:864.5px;height:61px;background:#a8b8c8;border:1.5px solid #4a90d0;box-sizing:border-box"></div>
<div style="position:absolute;left:402.7px;top:802px;width:850.1px;height:11px;background:#a9a9a9"></div>
<div style="position:absolute;left:402.7px;top:802px;width:1.8px;height:11px;background:#4a86b0"></div>
<div style="position:absolute;left:396.5px;top:817px;width:859.5px;height:36px;overflow:hidden"><div style="position:absolute;left:-396.5px;top:-817px;width:1280px;height:900px">
<span class="t" style="left:400.2px;top:820.92px;font-size:12.5px;font-weight:400;color:#333;">K:NEW VOLUME(FAT32)</span>
<span class="t" style="left:400.2px;top:837.62px;font-size:12.5px;font-weight:400;color:#333;">14.5 GB (Used: 0%)</span>
</div></div>
<svg style="position:absolute;left:1263px;top:883px;" width="10" height="10" viewBox="0 0 10 10"><rect x="6" y="0" width="2" height="2" fill="#8a8a8a"/><rect x="3" y="3" width="2" height="2" fill="#8a8a8a"/><rect x="6" y="3" width="2" height="2" fill="#8a8a8a"/><rect x="0" y="6" width="2" height="2" fill="#8a8a8a"/><rect x="3" y="6" width="2" height="2" fill="#8a8a8a"/><rect x="6" y="6" width="2" height="2" fill="#8a8a8a"/></svg>
<div style="position:absolute;left:412px;top:326px;width:452px;height:243px;background:#fff;box-shadow:0 0 1px 0.5px rgba(70,70,110,0.8), 0 0 5px 1.5px rgba(70,70,110,0.45)"></div>
<div style="position:absolute;left:412px;top:326px;width:452px;height:37px;background:#0070c6"></div>
<svg style="position:absolute;left:412px;top:328px;" width="30" height="30" viewBox="0 0 30 30">
<defs>
<linearGradient id="lyb" x1="0" y1="0" x2="1" y2="0.3"><stop offset="0" stop-color="#ffe830"/><stop offset="0.6" stop-color="#f0c830"/><stop offset="1" stop-color="#e89018"/></linearGradient>
<linearGradient id="lbb" x1="0" y1="0" x2="1" y2="1"><stop offset="0" stop-color="#b8dcf4"/><stop offset="1" stop-color="#5aa8e0"/></linearGradient>
<radialGradient id="lsb" cx="0.4" cy="0.4" r="0.7"><stop offset="0" stop-color="#fff4b0"/><stop offset="1" stop-color="#c8a030"/></radialGradient>
</defs>
<path d="M6,13 L6,19 A10.3,5.5 0 0 0 26.6,19 L26.6,13 Z" fill="url(#lyb)"/>
<ellipse cx="16.3" cy="13" rx="10.3" ry="5.5" fill="#f4e070"/>
<path d="M16.3,13 L6,13 A10.3,5.5 0 0 1 14,7.6 Z" fill="url(#lbb)"/>
<path d="M6,13 L6,15 A10.3,5 0 0 0 8,17" fill="#4a98d8" opacity="0.6"/>
<path d="M16.3,13 L22,8.5 A10.3,5.5 0 0 1 26.6,13 Z" fill="#70d050"/>
<polygon points="21.5,3 22.7,6 25.8,6.2 23.4,8.2 24.2,11.2 21.5,9.5 18.8,11.2 19.6,8.2 17.2,6.2 20.3,6" fill="url(#lsb)"/>
<polygon points="15.5,5.5 16.4,7.6 18.6,7.8 16.9,9.2 17.5,11.4 15.5,10.2 13.5,11.4 14.1,9.2 12.4,7.8 14.6,7.6" fill="url(#lsb)"/>
<polygon points="19,13 19.8,14.8 21.8,15 20.3,16.2 20.8,18.2 19,17.1 17.2,18.2 17.7,16.2 16.2,15 18.2,14.8" fill="#f0d870" opacity="0.8"/>
<line x1="6" y1="25.5" x2="21" y2="11" stroke="#8a8a8a" stroke-width="1.8"/>
<line x1="6" y1="25" x2="13" y2="18.2" stroke="#e8e8e8" stroke-width="0.8"/>
</svg>
<span class="t" style="left:443.2px;top:338.07px;font-size:13.5px;font-weight:400;color:#fff;letter-spacing:-0.235px;">Format Partition</span>
<svg style="position:absolute;left:843px;top:336px;" width="14" height="14" viewBox="0 0 14 14"><line x1="2" y1="1.8" x2="12" y2="11.8" stroke="#fff" stroke-width="1.5"/><line x1="12" y1="1.8" x2="2" y2="11.8" stroke="#fff" stroke-width="1.5"/></svg>
<svg style="position:absolute;left:436px;top:388px;" width="38" height="39" viewBox="0 0 38 39">
<path d="M3,25 L5.6,3.6 Q5.9,1.5 8,1.5 L28.4,1.5 Q30.5,1.5 30.8,3.6 L33.4,25" fill="none" stroke="#1e1e1e" stroke-width="2" stroke-linejoin="round"/>
<rect x="1.6" y="24.6" width="33.2" height="12.6" rx="2.6" fill="none" stroke="#1e1e1e" stroke-width="2"/>
<circle cx="28.6" cy="32.5" r="1.5" fill="#1e1e1e"/>
<circle cx="18.6" cy="14.6" r="6.2" fill="none" stroke="#1e1e1e" stroke-width="2"/>
<line x1="14.3" y1="10.3" x2="22.9" y2="18.9" stroke="#1e1e1e" stroke-width="2"/>
</svg>
<span class="t" style="left:486.3px;top:404.32px;font-size:12.5px;font-weight:400;color:#222;letter-spacing:0.383px;">Formating the partition will destroy the data on the partition!</span>
<span class="t" style="left:506.5px;top:446.32px;font-size:12.5px;font-weight:400;color:#222;letter-spacing:0.147px;">Partition Label:</span>
<div style="position:absolute;left:598px;top:439px;width:200px;height:22px;background:#fff;border:1px solid #b9b9b9;box-sizing:border-box"></div>
<span class="t" style="left:601.3px;top:446.32px;font-size:12.5px;font-weight:400;color:#222;letter-spacing:0.138px;">Win11 24H2</span>
<span class="t" style="left:525.1px;top:474.82px;font-size:12.5px;font-weight:400;color:#222;letter-spacing:-0.161px;">File System:</span>
<div style="position:absolute;left:598px;top:467px;width:200px;height:23px;background:#fff;border:1px solid #b9b9b9;box-sizing:border-box"></div>
<div style="position:absolute;left:781px;top:468px;width:1px;height:21px;background:#d0d0d0"></div>
<svg style="position:absolute;left:784px;top:475px;" width="11" height="8" viewBox="0 0 11 8"><polygon points="1,1.5 9,1.5 5,6" fill="#3a7ec8"/></svg>
<span class="t" style="left:601.3px;transform:scaleX(0.8854);transform-origin:0 0;top:474.82px;font-size:12.5px;font-weight:400;color:#222;">NTFS</span>
<span class="t" style="left:522.7px;top:503.32px;font-size:12.5px;font-weight:400;color:#222;letter-spacing:-0.122px;">Cluster Size:</span>
<div style="position:absolute;left:598px;top:496px;width:200px;height:23px;background:#fff;border:1px solid #b9b9b9;box-sizing:border-box"></div>
<div style="position:absolute;left:600px;top:498px;width:181px;height:19px;background:#0078d7"></div>
<div style="position:absolute;left:781px;top:497px;width:1px;height:21px;background:#d0d0d0"></div>
<svg style="position:absolute;left:784px;top:504px;" width="11" height="8" viewBox="0 0 11 8"><polygon points="1,1.5 9,1.5 5,6" fill="#3a7ec8"/></svg>
<span class="t" style="left:601.3px;top:503.32px;font-size:12.5px;font-weight:400;color:#fff;letter-spacing:0.198px;">Default</span>
<div style="position:absolute;left:519px;top:464.4px;width:280px;height:28.7px;border:3px solid #ff1a1a;border-radius:3px;box-sizing:border-box"></div>
<span class="t" style="left:492.5px;transform:scaleX(0.9143);transform-origin:0 0;top:466.48px;font-size:24px;font-weight:400;color:#ff1a1a;">2.</span>
<svg style="position:absolute;left:422px;top:537px;" width="22" height="22" viewBox="0 0 22 22"><circle cx="11" cy="11" r="10.5" fill="#3a86d4"/><text x="11" y="17" text-anchor="middle" font-size="16.5" font-weight="400" fill="#fff" font-family="Liberation Sans">?</text></svg>
<span class="t" style="left:451.4px;top:542.82px;font-size:12.5px;font-weight:400;color:#3a8ee6;letter-spacing:0.305px;text-decoration:underline">Format Partition Tutorial</span>
<div style="position:absolute;left:696px;top:538px;width:74px;height:22px;background:#e1e1e1;border:1px solid #adadad;box-sizing:border-box"></div>
<span class="t" style="left:722.8px;top:544.62px;font-size:12.5px;font-weight:400;color:#222;letter-spacing:-0.363px;">OK</span>
<div style="position:absolute;left:723px;top:556px;width:9px;height:1px;background:#222"></div>
<div style="position:absolute;left:693.3px;top:535.7px;width:79.2px;height:26.8px;border:3px solid #ff1a1a;border-radius:3px;box-sizing:border-box"></div>
<div style="position:absolute;left:777px;top:536px;width:78px;height:24px;background:#efefef;border:1px solid #cfcfcf;box-sizing:border-box;border-radius:2px"></div>
<span class="t" style="left:797.5px;top:544.62px;font-size:12.5px;font-weight:400;color:#222;letter-spacing:-0.284px;">Cancel</span>
<div style="position:absolute;left:798px;top:556px;width:7px;height:1px;background:#222"></div>
</body></html>
